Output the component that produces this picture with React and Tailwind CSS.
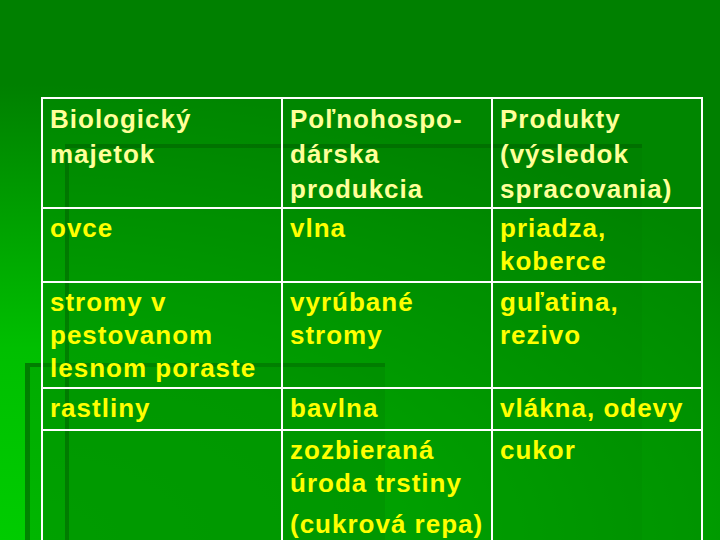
const rows = [
  {
    head: true,
    h: "h-[110px]",
    cells: [["Biologický", "majetok"], ["Poľnohospo-", "dárska", "produkcia"], ["Produkty", "(výsledok", "spracovania)"]],
  },
  { h: "h-[74px]", cells: [["ovce"], ["vlna"], ["priadza,", "koberce"]] },
  {
    h: "h-[106px]",
    cells: [["stromy v", "pestovanom", "lesnom poraste"], ["vyrúbané", "stromy"], ["guľatina,", "rezivo"]],
  },
  { h: "h-[42px]", cells: [["rastliny"], ["bavlna"], ["vlákna, odevy"]] },
  // third line here is its own paragraph in the original, a bit lower
  { h: "h-[130px]", cells: [[], ["zozbieraná", "úroda trstiny", "+(cukrová repa)"], ["cukor"]] },
];

const Cell = ({ lines, head, h }) => (
  <div
    className={`${h} border-r-2 border-b-2 border-white bg-[rgba(0,140,0,0.5)] pl-[7px] pt-[3px] whitespace-nowrap font-bold text-[26px] tracking-[1px] ${
      head ? "leading-[35px] text-[#ffff99]" : "leading-[33px] text-[#ffff00]"
    }`}
  >
    {lines.map((l, i) =>
      l.startsWith("+") ? (
        <div key={i} className="mt-[8px]">
          {l.slice(1)}
        </div>
      ) : (
        <div key={i}>{l}</div>
      )
    )}
  </div>
);

export default function App() {
  return (
    <div
      className="relative w-[720px] h-[540px] overflow-hidden bg-[radial-gradient(ellipse_1000px_480px_at_0%_100%,#00cc00_0%,#00bf00_40%,#008000_95%)]"
      style={{ fontFamily: '"Liberation Sans", Arial, sans-serif' }}
    >
      {/* template lines */}
      <div className="absolute left-[65px] top-[144px] w-[577px] h-[400px] border-t-4 border-l-4 border-[rgba(0,40,0,0.45)] bg-black/5" />
      <div className="absolute left-[25px] top-[363px] w-[360px] h-[200px] border-t-4 border-l-[5px] border-[rgba(0,40,0,0.35)] bg-black/10" />

      <div className="relative ml-[41px] pt-[97px]">
        <div className="grid grid-cols-[240px_210px_210px] w-[662px] border-l-2 border-t-2 border-white">
          {rows.map((r, ri) =>
            r.cells.map((c, ci) => <Cell key={ri + "-" + ci} lines={c} head={r.head} h={r.h} />)
          )}
        </div>
      </div>
    </div>
  );
}
